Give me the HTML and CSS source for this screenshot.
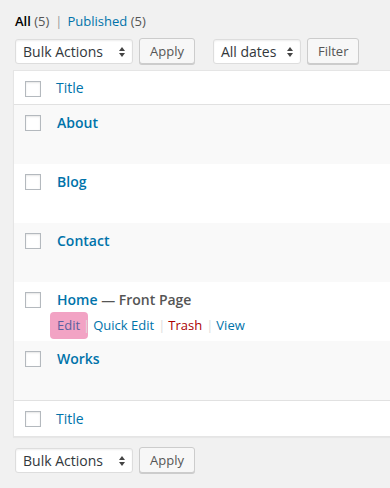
FILE: index.html
```html
<!DOCTYPE html>
<html>
<head>
<meta charset="utf-8">
<link rel="stylesheet" href="styles.css">
</head>
<body>
<div class="wrap">
  <ul class="subsubsub">
    <li class="current">All <span class="count">(5)</span></li>
    <li class="sep">|</li>
    <li><a href="#">Published</a> <span class="count">(5)</span></li>
  </ul>
  <div class="tablenav top">
    <div class="select">Bulk Actions<span class="arrows"></span></div>
    <button class="button">Apply</button>
    <div class="select dates">All dates<span class="arrows"></span></div>
    <button class="button">Filter</button>
  </div>
  <div class="table">
    <div class="row head"><span class="cb"></span><a class="col" href="#">Title</a></div>
    <div class="row alt"><span class="cb"></span><div class="cell"><a class="title" href="#">About</a></div></div>
    <div class="row"><span class="cb"></span><div class="cell"><a class="title" href="#">Blog</a></div></div>
    <div class="row alt"><span class="cb"></span><div class="cell"><a class="title" href="#">Contact</a></div></div>
    <div class="row"><span class="cb"></span><div class="cell"><div><a class="title" href="#">Home</a><span class="state"> — Front Page</span></div>
      <div class="actions"><a class="edit" href="#">Edit</a><span class="bar">|</span><a href="#">Quick Edit</a><span class="bar">|</span><a class="trash" href="#">Trash</a><span class="bar">|</span><a href="#">View</a></div></div></div>
    <div class="row alt"><span class="cb"></span><div class="cell"><a class="title" href="#">Works</a></div></div>
    <div class="row foot"><span class="cb"></span><a class="col" href="#">Title</a></div>
  </div>
  <div class="tablenav bottom">
    <div class="select">Bulk Actions<span class="arrows"></span></div>
    <button class="button">Apply</button>
  </div>
</div>
</body>
</html>
```
FILE: styles.css
```css
html, body {
  margin: 0;
  padding: 0;
  background: #f1f1f1;
  font-family: "Open Sans", "Liberation Sans", sans-serif;
  font-size: 13px;
  color: #444;
}
a { color: #0073aa; text-decoration: none; }
.wrap {
  padding: 11px 0 0 13px;
  width: 420px;
}
.subsubsub {
  list-style: none;
  margin: 0 0 0 2px;
  padding: 0;
  display: flex;
  line-height: 20px;
  font-size: 13px;
  color: #666;
}
.subsubsub li { white-space: pre; }
.subsubsub .current { color: #000; font-weight: 600; }
.subsubsub .current .count { font-weight: 400; color: #555; }
.subsubsub .sep { color: #999; padding: 0 5px 0 6px; }
.count { color: #555; }
.tablenav {
  display: flex;
  align-items: center;
  height: 28px;
  margin-left: 2px;
}
.tablenav.top { margin-top: 6px; margin-bottom: 5px; }
.tablenav.bottom { margin-top: 9px; }
.select {
  box-sizing: border-box;
  width: 118px;
  height: 25px;
  background: #fff;
  border: 1px solid #ddd;
  border-radius: 3px;
  box-shadow: inset 0 1px 2px rgba(0,0,0,0.07);
  font-size: 14px;
  color: #32373c;
  line-height: 23px;
  padding-left: 7px;
  position: relative;
}
.select.dates { width: 88px; margin-left: 18px; }
.arrows {
  position: absolute;
  right: 9px;
  top: 7px;
  width: 0;
  height: 0;
}
.arrows::before, .arrows::after {
  content: "";
  position: absolute;
  left: -4px;
  border-left: 3.5px solid transparent;
  border-right: 3.5px solid transparent;
}
.arrows::before { top: 0; border-bottom: 4px solid #444; }
.arrows::after { top: 6px; border-top: 4px solid #444; }
.button {
  box-sizing: border-box;
  height: 26px;
  margin-left: 6px;
  padding: 0 10px;
  background: #f7f7f7;
  border: 1px solid #ccc;
  border-radius: 3px;
  box-shadow: 0 1px 0 #ccc;
  font-family: "Open Sans", "Liberation Sans", sans-serif;
  font-size: 13px;
  color: #555;
  line-height: 24px;
}
.table {
  background: #fff;
  border: 1px solid #e5e5e5;
  box-shadow: 0 1px 1px rgba(0,0,0,0.04);
  width: 400px;
}
.row {
  display: flex;
  align-items: flex-start;
  height: 59px;
  box-sizing: border-box;
  padding: 10px 0 0 11px;
}
.row.alt { background: #f9f9f9; }
.row.head {
  height: 34px;
  border-bottom: 1px solid #e1e1e1;
  padding-top: 9px;
}
.row.foot {
  height: 36px;
  border-top: 1px solid #e1e1e1;
  padding-top: 10px;
}
.cb {
  box-sizing: border-box;
  width: 16px;
  height: 16px;
  border: 1px solid #b4b9be;
  background: #fff;
  box-shadow: inset 0 1px 2px rgba(0,0,0,0.1);
  flex: none;
}
.row.head .cb { margin-top: 1px; }
.col {
  margin-left: 15px;
  font-size: 14px;
  line-height: 16px;
}
.cell {
  margin-left: 16px;
  margin-top: -1px;
}
.title {
  font-size: 14px;
  font-weight: 600;
  line-height: 18px;
}
.state {
  font-size: 14px;
  font-weight: 600;
  color: #555;
  line-height: 18px;
}
.actions {
  display: flex;
  align-items: center;
  margin-top: 3px;
  font-size: 13px;
  line-height: 19px;
}
.actions .edit {
  background: #f2a3c4;
  border-radius: 4px;
  padding: 4px 8px 4px 7px;
  margin: 0 -9px 0 -7px;
  color: #5b5f9e;
}
.actions .bar { color: #ddd; padding: 0 3px 0 4px; position: relative; }
.actions .trash { color: #a00; }
```
